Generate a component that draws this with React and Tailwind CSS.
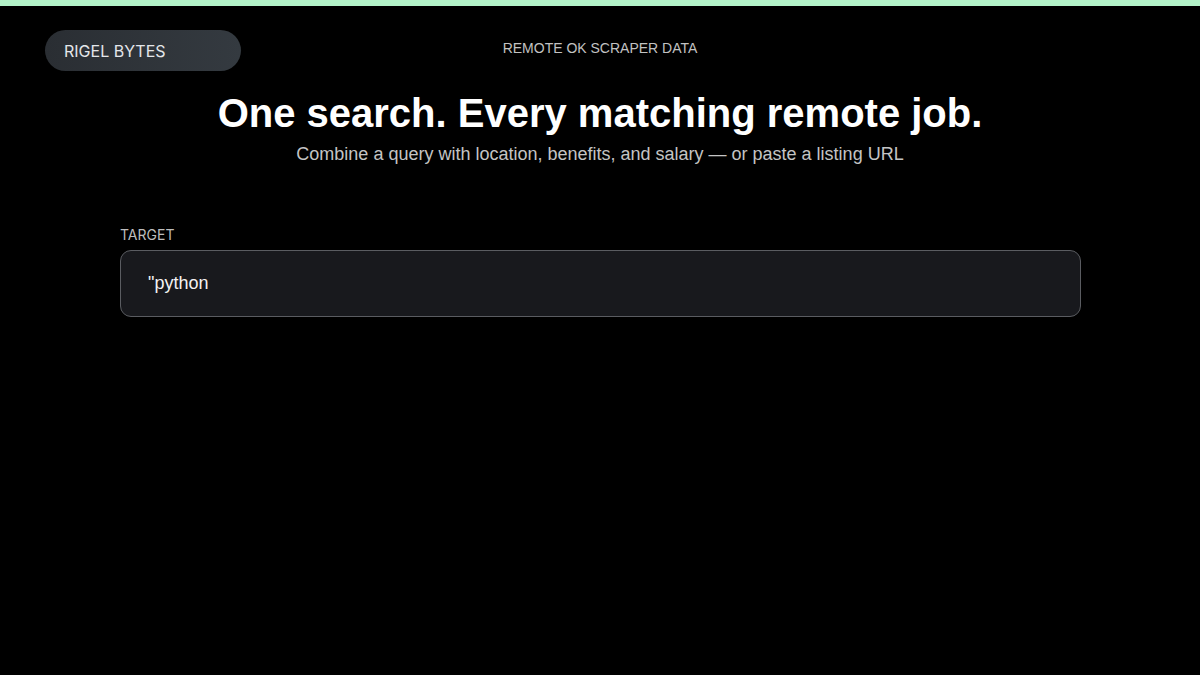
export default function App() {
  return (
    <div className="min-h-screen w-full bg-black text-white font-['Liberation_Sans',Arial,sans-serif]">
      <div className="h-[6px] bg-[#b3f2c9]" />
      <header className="relative flex justify-center pt-[35px]">
        <div className="absolute left-[45px] top-[24px] flex h-[41px] w-[196px] items-center rounded-full bg-gradient-to-r from-[#2a2e33] to-[#343a40] pl-[19px] font-['Inter',sans-serif] text-[16px] text-[#e4e6ea]">
          RIGEL BYTES
        </div>
        <p className="text-[14px] leading-[15px] text-[#c2c2c2]">REMOTE OK SCRAPER DATA</p>
      </header>
      <section className="mt-[34px] flex flex-col items-center">
        <h1 className="text-[40px] font-bold leading-[46px] text-white">
          One search. Every matching remote job.
        </h1>
        <p className="mt-[7px] text-[18px] leading-[22px] text-[#c4c4c4]">
          Combine a query with location, benefits, and salary — or paste a listing URL
        </p>
      </section>
      <div className="mx-[120px] mt-[62px] w-[961px]">
        <label className="block font-['Inter',sans-serif] text-[14px] leading-[16px] text-[#bdbdbd]">
          TARGET
        </label>
        <div className="mt-[7px] flex h-[67px] items-center rounded-[11px] border border-[#5a5c61] bg-[#18191d] px-[27px] text-[18px] text-[#f2f2f2]">
          "python
        </div>
      </div>
    </div>
  );
}
